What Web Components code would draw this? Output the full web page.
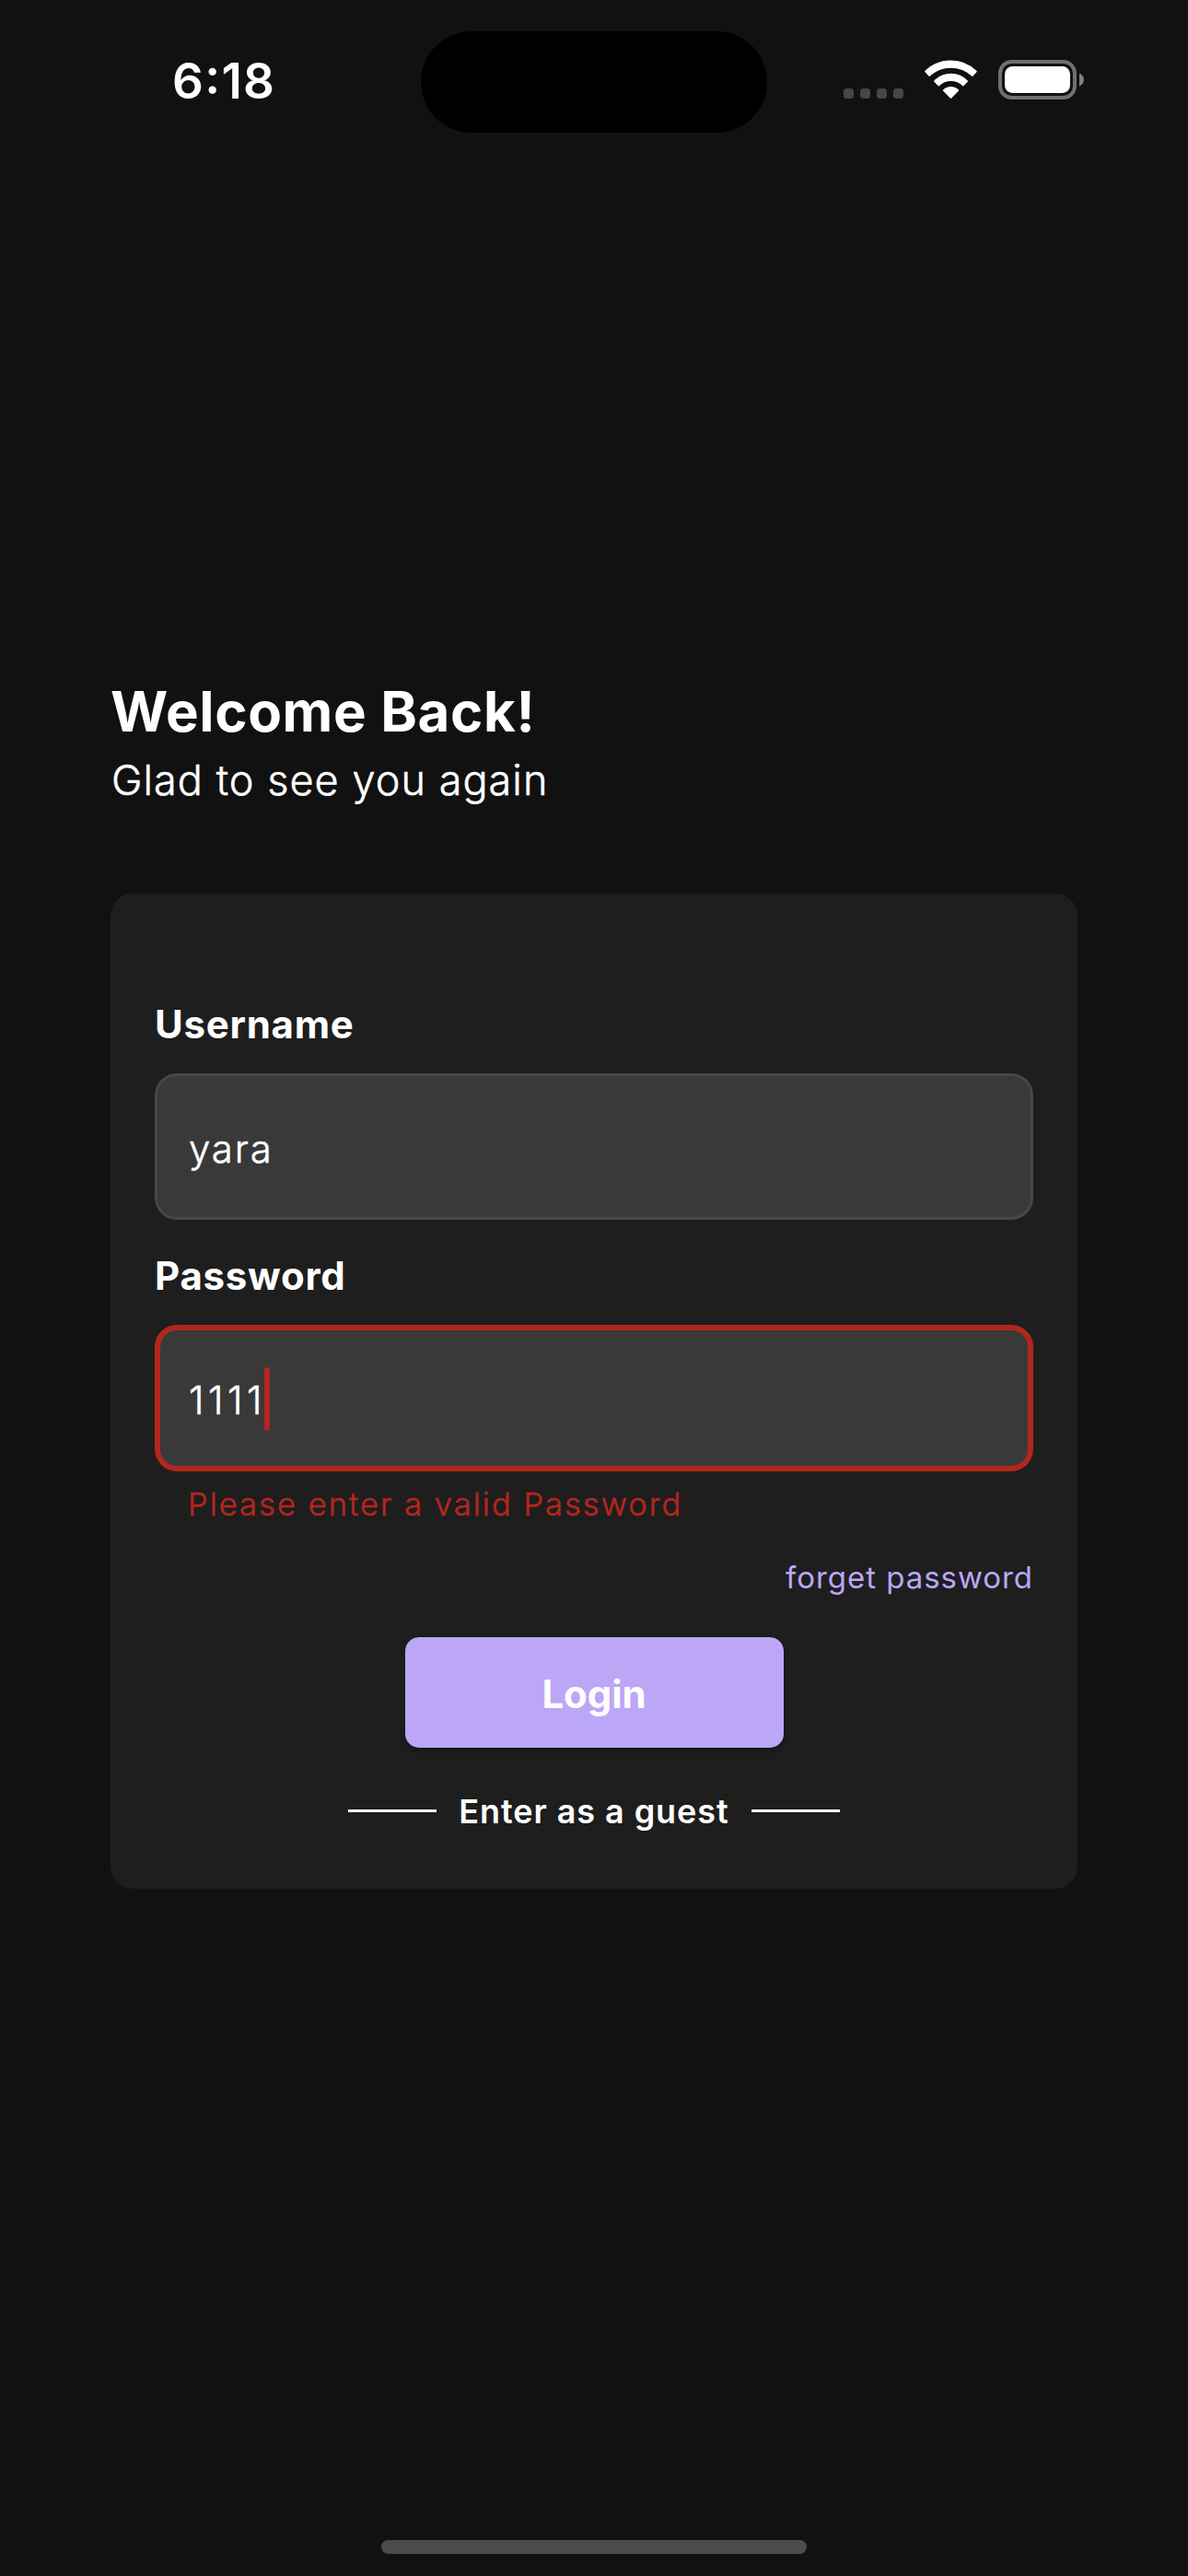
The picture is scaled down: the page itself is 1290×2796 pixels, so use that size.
<!DOCTYPE html>
<html lang="en">
<head>
<meta charset="utf-8">
<title>Login</title>
<style>
html,body{margin:0;height:100%;background:#111}
body{font-family:Inter,"Liberation Sans",sans-serif;color:#fff}
</style>
</head>
<body>
<login-screen></login-screen>
<script>
const define = (name, html) => {
  const t = document.createElement('template');
  t.innerHTML = html;
  customElements.define(name, class extends HTMLElement {
    constructor() {
      super();
      this.attachShadow({mode: 'open'}).append(t.content.cloneNode(true));
    }
  });
};

define('status-bar', `
<style>
:host{display:flex;align-items:flex-start;height:176px;box-sizing:border-box;padding-top:34px}
.time{width:270px;margin-left:187px;height:110px;line-height:109px;font-size:53px;font-weight:600;letter-spacing:1.3px;font-feature-settings:"calt" 1,"case" 1}
.island{width:376px;height:110px;border-radius:55px;background:#000;flex:none}
.icons{display:flex;margin-left:83px;padding-top:31px;align-items:flex-start}
.dots{display:flex;gap:7px;padding-top:31px}
.dots i{width:11px;height:11px;border-radius:3.5px;background:#464646}
.wifi{margin-left:23px;width:57px;height:42px}
.battery{margin-left:23px;width:94px;height:43px}
svg{display:block;flex:none}
</style>
<div class="time">6:18</div>
<div class="island"></div>
<div class="icons">
  <div class="dots"><i></i><i></i><i></i><i></i></div>
  <svg class="wifi" viewBox="342 75 171 127" preserveAspectRatio="none" fill="#fff" stroke="#fff" stroke-width="4" stroke-linejoin="round">
    <path d="M344.500 113A117 117 0 0 1 510.500 113L497.500 127.500A101 101 0 0 0 357.500 127.500Z"/>
    <path d="M374 145A74 74 0 0 1 481.500 145L467.500 159A57 57 0 0 0 388 159Z"/>
    <path d="M403.500 175A33 33 0 0 1 451.500 175L427.500 199.500Z"/>
  </svg>
  <svg class="battery" viewBox="0 0 94 43">
    <rect x="2" y="2" width="81" height="39" rx="12.500" fill="none" stroke="#707070" stroke-width="4"/>
    <rect x="7" y="7" width="71" height="29" rx="8.500" fill="#fff"/>
    <path d="M88 14.500C91 15.700 93 18.300 93 21.500S91 27.300 88 28.500Z" fill="#808080"/>
  </svg>
</div>`);

define('page-heading', `
<style>
:host{display:block}
h1{margin:0;font-size:60px;font-weight:700;line-height:78px;letter-spacing:.65px}
p{margin:0;font-size:45px;font-weight:300;line-height:72px;letter-spacing:1.05px;padding-left:1px;-webkit-text-stroke:.5px}
</style>
<h1><slot name="title"></slot></h1>
<p><slot></slot></p>`);

define('login-card', `
<style>
:host{display:flex;flex-direction:column;box-sizing:border-box;width:1050px;height:1080px;padding:110px 48px 0;border-radius:24px;background:#1e1e1e}
</style>
<slot></slot>`);

define('text-field', `
<style>
:host{display:block;height:273px;--line:#49454f;--w:3px}
:host([invalid]){--line:#b3261e;--w:6px;height:auto}
.label{height:54px;line-height:54px;padding-top:5px;margin-bottom:26px;font-size:42px;font-weight:700;letter-spacing:.75px}
.box{display:flex;align-items:center;box-sizing:border-box;height:159px;border:var(--w) solid var(--line);border-radius:24px;background:#393939;padding-left:calc(37px - var(--w))}
.value{font-size:42px;font-weight:300;line-height:60px;letter-spacing:1.85px;padding-top:4px;-webkit-text-stroke:.5px}
:host([invalid]) .value{letter-spacing:4.500px}
.caret{display:none;width:6px;height:69px;border-radius:3px;background:#b3261e;margin:1px 0 0 -2px}
:host([invalid]) .caret{display:block}
.error{display:none;padding-left:36px;font-size:34.500px;font-weight:300;line-height:50px;margin-top:11px;letter-spacing:2.02px;color:#b3261e;-webkit-text-stroke:.6px}
:host([invalid]) .error{display:block}
</style>
<div class="label"><slot name="label"></slot></div>
<div class="box"><span class="value"><slot></slot></span><i class="caret"></i></div>
<div class="error"><slot name="error"></slot></div>`);

define('text-link', `
<style>
:host{display:block;align-self:flex-end;font-size:33px;line-height:48px;letter-spacing:.95px;color:#bca6f6;margin-top:30px}
</style>
<slot></slot>`);

define('primary-button', `
<style>
:host{display:block;align-self:center;margin-top:41px}
button{display:block;width:411px;height:120px;padding:3px 0 0;border:0;border-radius:15px;background:#bca6f6;color:#fff;font:700 42px/117px Inter,"Liberation Sans",sans-serif;letter-spacing:-.1px;box-shadow:0 3px 6px rgba(0,0,0,.3)}
</style>
<button><slot></slot></button>`);

define('guest-link', `
<style>
:host{display:flex;align-self:center;align-items:center;gap:24px;margin-top:45px;font-size:36px;font-weight:600;line-height:48px;letter-spacing:.93px}
i{width:96px;height:3px;background:#fff;margin-bottom:2px}
span{width:294px;text-align:center;white-space:nowrap}
</style>
<i></i><span><slot></slot></span><i></i>`);

define('home-indicator', `
<style>:host{display:block;width:462px;height:15px;border-radius:8px;background:#4c4c4c;margin:auto auto 24px}</style>`);

define('login-screen', `
<style>
:host{display:flex;flex-direction:column;width:1290px;height:2796px;background:#111;overflow:hidden}
main{padding:557px 120px 0}
page-heading{height:237px}
</style>
<status-bar></status-bar>
<main>
  <page-heading><span slot="title">Welcome Back!</span>Glad to see you again</page-heading>
  <login-card>
    <text-field><span slot="label">Username</span>yara</text-field>
    <text-field invalid><span slot="label">Password</span>1111<span slot="error">Please enter a valid Password</span></text-field>
    <text-link>forget password</text-link>
    <primary-button>Login</primary-button>
    <guest-link>Enter as a guest</guest-link>
  </login-card>
</main>
<home-indicator></home-indicator>`);
</script>
</body>
</html>
